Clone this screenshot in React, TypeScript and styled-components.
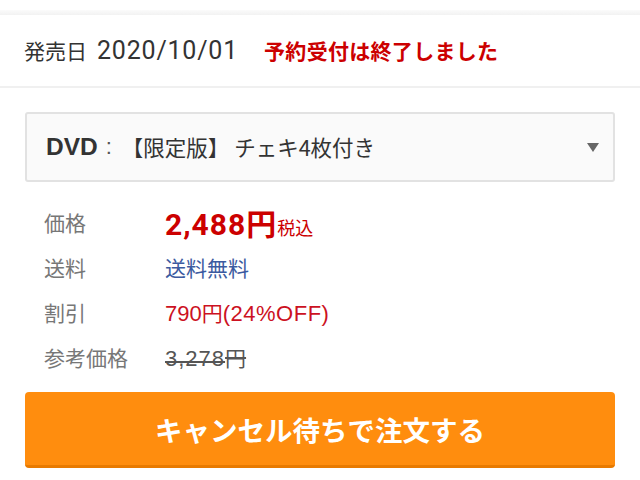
import React from "react";
import styled, { createGlobalStyle } from "styled-components";

const Global = createGlobalStyle`
  html, body { margin: 0; padding: 0; background: #fff; }
  body { font-family: "Noto Sans CJK JP", "Noto Sans", sans-serif; }
`;

const Page = styled.div`
  width: 640px;
  height: 480px;
  overflow: hidden;
  background: #fff;
  padding-top: 10px;
  box-sizing: border-box;
`;

const TopShade = styled.div`
  height: 5px;
  background: linear-gradient(#fbfbfb, #f2f2f2);
`;

const ReleaseBar = styled.div`
  height: 71px;
  display: flex;
  align-items: center;
  padding: 0 24px;
  border-bottom: 2px solid #f0f0f0;
  gap: 26px;
  font-size: 21px;
  line-height: 1;
`;

const ReleaseDate = styled.span`
  color: #333;
`;

const Num = styled.span<{ $size: number; $bold?: boolean; $font?: string; $ls?: number; $ml?: number }>`
  font-family: ${(p) => p.$font ?? '"Liberation Sans"'}, "Noto Sans CJK JP", sans-serif;
  font-size: ${(p) => p.$size}px;
  font-weight: ${(p) => (p.$bold ? 700 : 400)};
  letter-spacing: ${(p) => p.$ls ?? 0}px;
  margin-left: ${(p) => p.$ml ?? 0}px;
`;

const Closed = styled.span`
  color: #cc0000;
  font-weight: 700;
  font-size: 21px;
  letter-spacing: 0.3px;
`;

const Body = styled.div`
  padding: 24px 25px 0;
`;

const Select = styled.div`
  height: 70px;
  box-sizing: border-box;
  border: 2px solid #e2e2e2;
  border-radius: 3px;
  background: #fafafa;
  display: flex;
  align-items: center;
  padding: 0 14px 0 19px;
  font-size: 21.5px;
  color: #333;
  line-height: 1;
`;

const SelectText = styled.span`
  flex: 1;
  display: flex;
  align-items: center;
`;

const Colon = styled.span`
  font-family: "Liberation Sans", sans-serif;
  font-size: 22px;
  margin: 0 10px 0 8px;
  color: #555;
`;

const Option = styled.span`
  white-space: pre;
`;

const Arrow = styled.span`
  width: 0;
  height: 0;
  border-left: 6px solid transparent;
  border-right: 6px solid transparent;
  border-top: 9px solid #666;
`;

const Table = styled.div`
  display: grid;
  grid-template-columns: 121px 1fr;
  grid-auto-rows: 45px;
  align-items: center;
  padding: 17px 0 0 19px;
`;

const Label = styled.span`
  font-size: 21px;
  color: #777;
`;

const Value = styled.span<{ $color: string; $strike?: boolean }>`
  font-size: 21px;
  color: ${(p) => p.$color};
  text-decoration: ${(p) => (p.$strike ? "line-through" : "none")};
`;

const Price = styled.span`
  font-size: 30px;
  font-weight: 700;
  color: #cc0000;
  letter-spacing: 1px;
`;

const Tax = styled.span`
  font-size: 18px;
  color: #cc0000;
`;

const Button = styled.button`
  margin-top: 13px;
  width: 100%;
  height: 76px;
  border: none;
  border-bottom: 3px solid #e87a00;
  border-radius: 4px;
  background: #ff8d0e;
  color: #fff;
  font-family: "Noto Sans CJK JP", sans-serif;
  font-size: 27.5px;
  font-weight: 700;
  display: flex;
  align-items: center;
  justify-content: center;
`;

export default function App() {
  return (
    <>
      <Global />
      <Page>
        <TopShade />
        <ReleaseBar>
          <ReleaseDate>
            発売日<Num $size={25} $font="Roboto" $ls={0.8} $ml={10}>2020/10/01</Num>
          </ReleaseDate>
          <Closed>予約受付は終了しました</Closed>
        </ReleaseBar>
        <Body>
          <Select>
            <SelectText>
              <Num $size={24.5} $bold>DVD</Num>
              <Colon>:</Colon>
              <Option>【限定版】 チェキ4枚付き</Option>
            </SelectText>
            <Arrow />
          </Select>
          <Table>
            <Label>価格</Label>
            <span>
              <Price>
                <Num $size={30} $bold $font="Roboto" $ls={1}>2,488</Num>円
              </Price>
              <Tax>税込</Tax>
            </span>
            <Label>送料</Label>
            <Value $color="#3b5aa0">送料無料</Value>
            <Label>割引</Label>
            <Value $color="#cc1122">
              <Num $size={22}>790</Num>円<Num $size={22} $ls={0.5}>(24%OFF)</Num>
            </Value>
            <Label>参考価格</Label>
            <Value $color="#555" $strike>
              <Num $size={22} $ls={1}>3,278</Num>円
            </Value>
          </Table>
          <Button>キャンセル待ちで注文する</Button>
        </Body>
      </Page>
    </>
  );
}
